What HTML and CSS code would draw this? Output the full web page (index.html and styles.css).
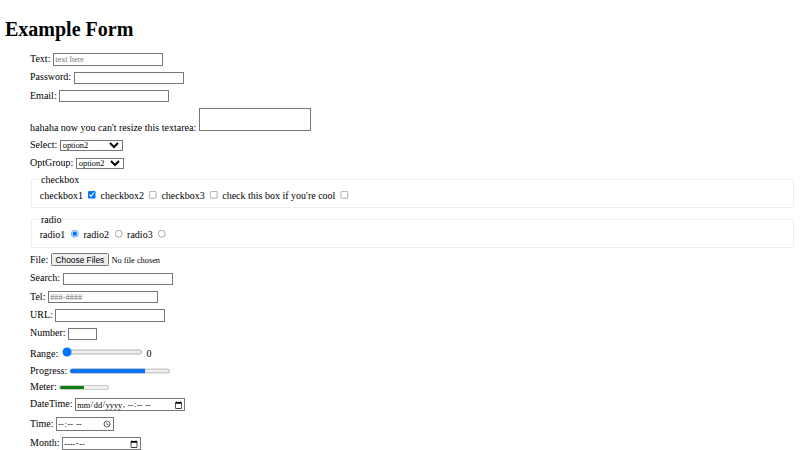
FILE: index.html
```html
<!DOCTYPE html>
<html lang="en">
<head>
    <meta charset="UTF-8">
    <meta name="viewport" content="width=device-width, initial-scale=1.0">
    <title>Example Form</title>
    <link rel="stylesheet" href="styles.css">
</head>
<body>
    <h1>Example Form</h1>
    <form class="form">
        <div class="row">
            <label for="text">Text:</label>
            <input type="text" id="text" class="field" placeholder="text here">
        </div>
        <div class="row">
            <label for="password">Password:</label>
            <input type="password" id="password" class="field">
        </div>
        <div class="row">
            <label for="email">Email:</label>
            <input type="email" id="email" class="field">
        </div>
        <div class="row">
            <label for="area">hahaha now you can't resize this textarea:</label>
            <textarea id="area" class="no-resize"></textarea>
        </div>
        <div class="row">
            <label for="select">Select:</label>
            <select id="select" class="wide">
                <option>option1</option>
                <option selected>option2</option>
                <option>option3</option>
            </select>
        </div>
        <div class="row">
            <label for="optgroup">OptGroup:</label>
            <select id="optgroup" class="narrow">
                <optgroup label="group 1">
                    <option>option1</option>
                    <option selected>option2</option>
                </optgroup>
                <optgroup label="group 2">
                    <option>option3</option>
                </optgroup>
            </select>
        </div>
        <fieldset>
            <legend>checkbox</legend>
            <label for="cb1">checkbox1</label>
            <input type="checkbox" id="cb1" checked>
            <label for="cb2">checkbox2</label>
            <input type="checkbox" id="cb2">
            <label for="cb3">checkbox3</label>
            <input type="checkbox" id="cb3">
            <label for="cb4">check this box if you're cool</label>
            <input type="checkbox" id="cb4">
        </fieldset>
        <fieldset>
            <legend>radio</legend>
            <label for="r1">radio1</label>
            <input type="radio" name="radio" id="r1" checked>
            <label for="r2">radio2</label>
            <input type="radio" name="radio" id="r2">
            <label for="r3">radio3</label>
            <input type="radio" name="radio" id="r3">
        </fieldset>
        <div class="row">
            <label for="file">File:</label>
            <input type="file" id="file" multiple>
        </div>
        <div class="row">
            <label for="search">Search:</label>
            <input type="search" id="search" class="field">
        </div>
        <div class="row">
            <label for="tel">Tel:</label>
            <input type="tel" id="tel" class="field" placeholder="###-####">
        </div>
        <div class="row">
            <label for="url">URL:</label>
            <input type="url" id="url" class="field">
        </div>
        <div class="row">
            <label for="number">Number:</label>
            <input type="number" id="number" class="short">
        </div>
        <div class="row">
            <label for="range">Range:</label>
            <input type="range" id="range" min="0" max="100" value="0">
            <output for="range">0</output>
        </div>
        <div class="row">
            <label for="progress">Progress:</label>
            <progress id="progress" max="100" value="75"></progress>
        </div>
        <div class="row">
            <label for="meter">Meter:</label>
            <meter id="meter" min="0" max="1" value="0.5"></meter>
        </div>
        <div class="row">
            <label for="datetime">DateTime:</label>
            <input type="datetime-local" id="datetime" class="datetime">
        </div>
        <div class="row">
            <label for="time">Time:</label>
            <input type="time" id="time" class="time">
        </div>
        <div class="row">
            <label for="month">Month:</label>
            <input type="month" id="month" class="month">
        </div>
    </form>
</body>
</html>
```

FILE: styles.css
```css
html {
    zoom: 0.625;
}

body {
    font-family: 'Liberation Serif', serif;
    color: #000;
    background: #fff;
}

h1 {
    margin-bottom: 0.58em;
}

input,
select,
textarea {
    font-family: 'Liberation Serif', serif;
    box-sizing: border-box;
}

input::file-selector-button {
    font-family: 'Liberation Sans', Arial, sans-serif;
}

.form {
    padding-left: 40px;
}

.row {
    margin-bottom: 9.2px;
}

.field {
    width: 176px;
}

.no-resize {
    resize: none;
    width: 179px;
    height: 37px;
}

.wide {
    width: 101px;
}

.narrow {
    width: 77px;
}

.short {
    width: 47px;
}

.datetime {
    width: 176px;
}

.time {
    width: 93px;
}

.month {
    width: 126px;
}

fieldset {
    margin-bottom: 9px;
}
```
